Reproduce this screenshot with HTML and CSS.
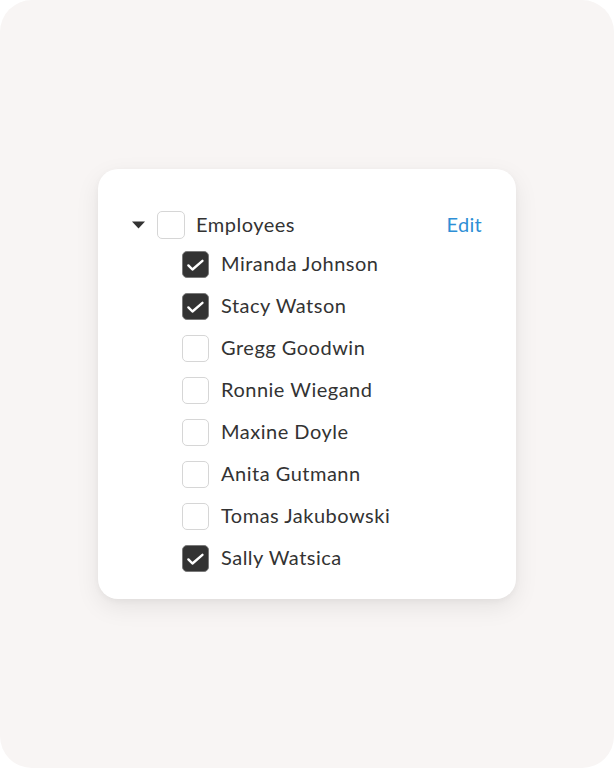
FILE: index.html
```html
<!DOCTYPE html>
<html>
<head>
<meta charset="utf-8">
<link rel="stylesheet" href="styles.css">
</head>
<body>
<div class="frame">
  <div class="card">
    <div class="header">
      <svg class="caret" width="13" height="8" viewBox="0 0 13 8"><path d="M0 0.5 L13 0.5 L6.5 7.5 Z" fill="#333"/></svg>
      <span class="box"></span>
      <span class="label">Employees</span>
      <span class="edit">Edit</span>
    </div>
    <ul class="list">
      <li class="row"><span class="box checked"><svg viewBox="0 0 27 27"><path d="M5.8 14.5 L10.2 18.9 L21 9.6" fill="none" stroke="#fff" stroke-width="2.6" stroke-linecap="round" stroke-linejoin="round"/></svg></span><span class="label">Miranda Johnson</span></li>
      <li class="row"><span class="box checked"><svg viewBox="0 0 27 27"><path d="M5.8 14.5 L10.2 18.9 L21 9.6" fill="none" stroke="#fff" stroke-width="2.6" stroke-linecap="round" stroke-linejoin="round"/></svg></span><span class="label">Stacy Watson</span></li>
      <li class="row"><span class="box"></span><span class="label">Gregg Goodwin</span></li>
      <li class="row"><span class="box"></span><span class="label">Ronnie Wiegand</span></li>
      <li class="row"><span class="box"></span><span class="label">Maxine Doyle</span></li>
      <li class="row"><span class="box"></span><span class="label">Anita Gutmann</span></li>
      <li class="row"><span class="box"></span><span class="label">Tomas Jakubowski</span></li>
      <li class="row"><span class="box checked"><svg viewBox="0 0 27 27"><path d="M5.8 14.5 L10.2 18.9 L21 9.6" fill="none" stroke="#fff" stroke-width="2.6" stroke-linecap="round" stroke-linejoin="round"/></svg></span><span class="label">Sally Watsica</span></li>
    </ul>
  </div>
</div>
</body>
</html>
```
FILE: styles.css
```css
html, body {
  margin: 0;
  padding: 0;
  background: #ffffff;
}
.frame {
  width: 614px;
  height: 768px;
  background: #f8f5f4;
  border-radius: 32px;
  display: flex;
  align-items: center;
  justify-content: center;
  font-family: Lato, "Open Sans", sans-serif;
  color: #333333;
}
.card {
  width: 418px;
  height: 430px;
  box-sizing: border-box;
  background: #ffffff;
  border-radius: 20px;
  box-shadow: 0 8px 24px rgba(0, 0, 0, 0.08), 0 2px 6px rgba(0, 0, 0, 0.04);
  padding: 38px 34px 20px 34px;
}
.header {
  height: 36px;
  display: flex;
  align-items: center;
}
.caret {
  margin-right: 12px;
  flex: none;
}
.box {
  width: 27px;
  height: 27px;
  box-sizing: border-box;
  border: 1px solid #d6d6d6;
  border-radius: 5px;
  background: #fff;
  flex: none;
  display: flex;
}
.header .box {
  width: 28px;
  height: 28px;
}
.box svg {
  width: 100%;
  height: 100%;
}
.box.checked {
  background: #333333;
  border-color: #7a7a7a;
}
.label {
  font-size: 20px;
  line-height: 24px;
  letter-spacing: 0.5px;
  position: relative;
  top: -1px;
}
.header .label {
  margin-left: 11px;
}
.edit {
  margin-left: auto;
  font-size: 20px;
  line-height: 24px;
  letter-spacing: 0.3px;
  color: #2e8fd6;
  position: relative;
  top: -1px;
}
.list {
  list-style: none;
  margin: 0;
  padding: 0 0 0 50px;
}
.row {
  height: 42px;
  display: flex;
  align-items: center;
}
.row .label {
  margin-left: 12px;
}
```
